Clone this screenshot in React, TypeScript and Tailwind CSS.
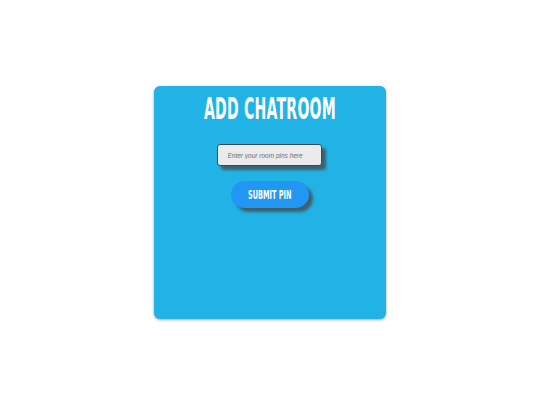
export default function App() {
  return (
    <div className="flex h-[405px] w-[540px] items-center justify-center bg-white">
      <div className="flex h-[233px] w-[232px] flex-col items-center rounded-md bg-[#21b3e6] shadow-[0_1px_3px_rgba(0,0,0,0.35)]">
        <h1 className="mt-[6px] h-[34px] origin-center scale-x-[0.52] whitespace-nowrap font-['DejaVu_Sans_Condensed',sans-serif] text-[30px] font-bold leading-[34px] tracking-[0.5px] text-white">
          ADD CHATROOM
        </h1>
        <input
          type="text"
          placeholder="Enter your room pins here"
          className="ml-[-2px] mt-[18px] h-[22px] w-[105px] rounded-[3px] border border-[#3a4a55] bg-[#ebebeb] px-[10px] font-['Liberation_Sans',sans-serif] text-[6.5px] italic text-[#555] shadow-[4px_4px_3px_rgba(70,70,70,0.75)] outline-none placeholder:text-[#6f6f6f]"
        />
        <button
          type="button"
          className="mt-[15px] flex h-[27px] w-[78px] items-center justify-center rounded-full bg-[#2196f3] shadow-[4px_4px_3px_rgba(70,70,70,0.75)]"
        >
          <span className="scale-x-[0.56] whitespace-nowrap font-['DejaVu_Sans_Condensed',sans-serif] text-[13px] font-bold text-white">
            SUBMIT PIN
          </span>
        </button>
      </div>
    </div>
  );
}
